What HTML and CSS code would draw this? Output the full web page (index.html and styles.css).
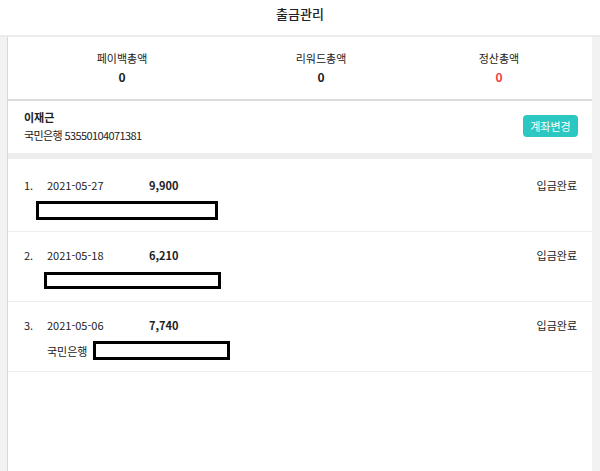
FILE: index.html
```html
<!DOCTYPE html>
<html lang="ko">
<head>
    <meta charset="UTF-8">
    <meta name="viewport" content="width=device-width, initial-scale=1.0">
    <title>출금관리</title>
    <link rel="stylesheet" href="styles.css">
</head>
<body>
    <div class="top">
        <h2>출금관리</h2>
    </div>

    <div class="wrap">
        <div class="summary">
            <div class="sum-item">
                <span class="sum-label">페이백총액</span>
                <span class="sum-value">0</span>
            </div>
            <div class="sum-item">
                <span class="sum-label">리워드총액</span>
                <span class="sum-value">0</span>
            </div>
            <div class="sum-item">
                <span class="sum-label">정산총액</span>
                <span class="sum-value red">0</span>
            </div>
        </div>

        <div class="account">
            <div class="account-info">
                <div class="account-name">이재근</div>
                <div class="account-num">국민은행 53550104071381</div>
            </div>
            <span class="changebutton">계좌변경</span>
        </div>

        <ul class="list">
            <li>
                <div class="line">
                    <span class="no">1.</span>
                    <span class="date">2021-05-27</span>
                    <span class="amount">9,900</span>
                    <span class="status">입금완료</span>
                </div>
                <div class="line2">
                    <span class="mask mask1"></span>
                </div>
            </li>
            <li>
                <div class="line">
                    <span class="no">2.</span>
                    <span class="date">2021-05-18</span>
                    <span class="amount">6,210</span>
                    <span class="status">입금완료</span>
                </div>
                <div class="line2">
                    <span class="mask mask2"></span>
                </div>
            </li>
            <li>
                <div class="line">
                    <span class="no">3.</span>
                    <span class="date">2021-05-06</span>
                    <span class="amount">7,740</span>
                    <span class="status">입금완료</span>
                </div>
                <div class="line2">
                    <span class="bank">국민은행</span>
                    <span class="mask mask3"></span>
                </div>
            </li>
        </ul>
    </div>
</body>
</html>
```

FILE: styles.css
```css
* {
    box-sizing: border-box;
}
html, body {
    height: 100%;
}
body {
    margin: 0;
    background: #f2f2f2;
    color: #222;
    font-family: "Noto Sans CJK KR", "Noto Sans", sans-serif;
    font-size: 11px;
    display: flex;
    flex-direction: column;
}
.top {
    background: #fff;
    height: 37px;
    border-bottom: 2px solid #ebebeb;
    text-align: center;
}
.top h2 {
    margin: 0;
    padding-top: 4px;
    font-size: 13px;
    font-weight: 500;
    line-height: 20px;
}
.wrap {
    flex: 1;
    margin: 0 8px 0 7px;
    background: #fff;
    border-left: 1px solid #d6d6d6;
}
.summary {
    display: grid;
    grid-template-columns: 228px 170px 1fr;
    padding: 12px 0 13px;
    border-bottom: 2px solid #dcdcdc;
}
.sum-item {
    display: flex;
    flex-direction: column;
    align-items: center;
}
.sum-label {
    line-height: 19px;
    font-size: 11px;
}
.sum-value {
    line-height: 18px;
    font-size: 12px;
    font-weight: 700;
}
.red {
    color: #f63c3c;
}
.account {
    display: flex;
    align-items: center;
    justify-content: space-between;
    padding: 7px 14px 9px 16px;
    border-bottom: 6px solid #ededed;
}
.account-name {
    line-height: 18px;
    font-weight: 700;
}
.account-num {
    line-height: 18px;
    letter-spacing: -0.6px;
}
.changebutton {
    width: 55px;
    height: 22px;
    line-height: 22px;
    text-align: center;
    background: #2cc7c1;
    color: #fff;
    border-radius: 4px;
    font-size: 11px;
    cursor: pointer;
}
.list {
    margin: 0;
    padding: 3px 0 0;
    list-style: none;
}
.list li {
    padding: 14px 15px 11px 16px;
    border-bottom: 1px solid #ededed;
}
.line {
    display: flex;
    line-height: 18px;
}
.no {
    width: 23px;
}
.date {
    width: 102px;
}
.amount {
    font-weight: 700;
}
.status {
    margin-left: auto;
}
.line2 {
    display: flex;
    align-items: center;
    height: 19px;
    margin-top: 7px;
}
.mask {
    display: inline-block;
    border: 3px solid #000;
    background: #fff;
}
.mask1 {
    width: 182px;
    height: 19px;
    margin-left: 12px;
}
.mask2 {
    width: 177px;
    height: 17px;
    margin-left: 20px;
}
.mask3 {
    width: 137px;
    height: 19px;
    margin-left: 6px;
}
.bank {
    margin-left: 23px;
}
```
